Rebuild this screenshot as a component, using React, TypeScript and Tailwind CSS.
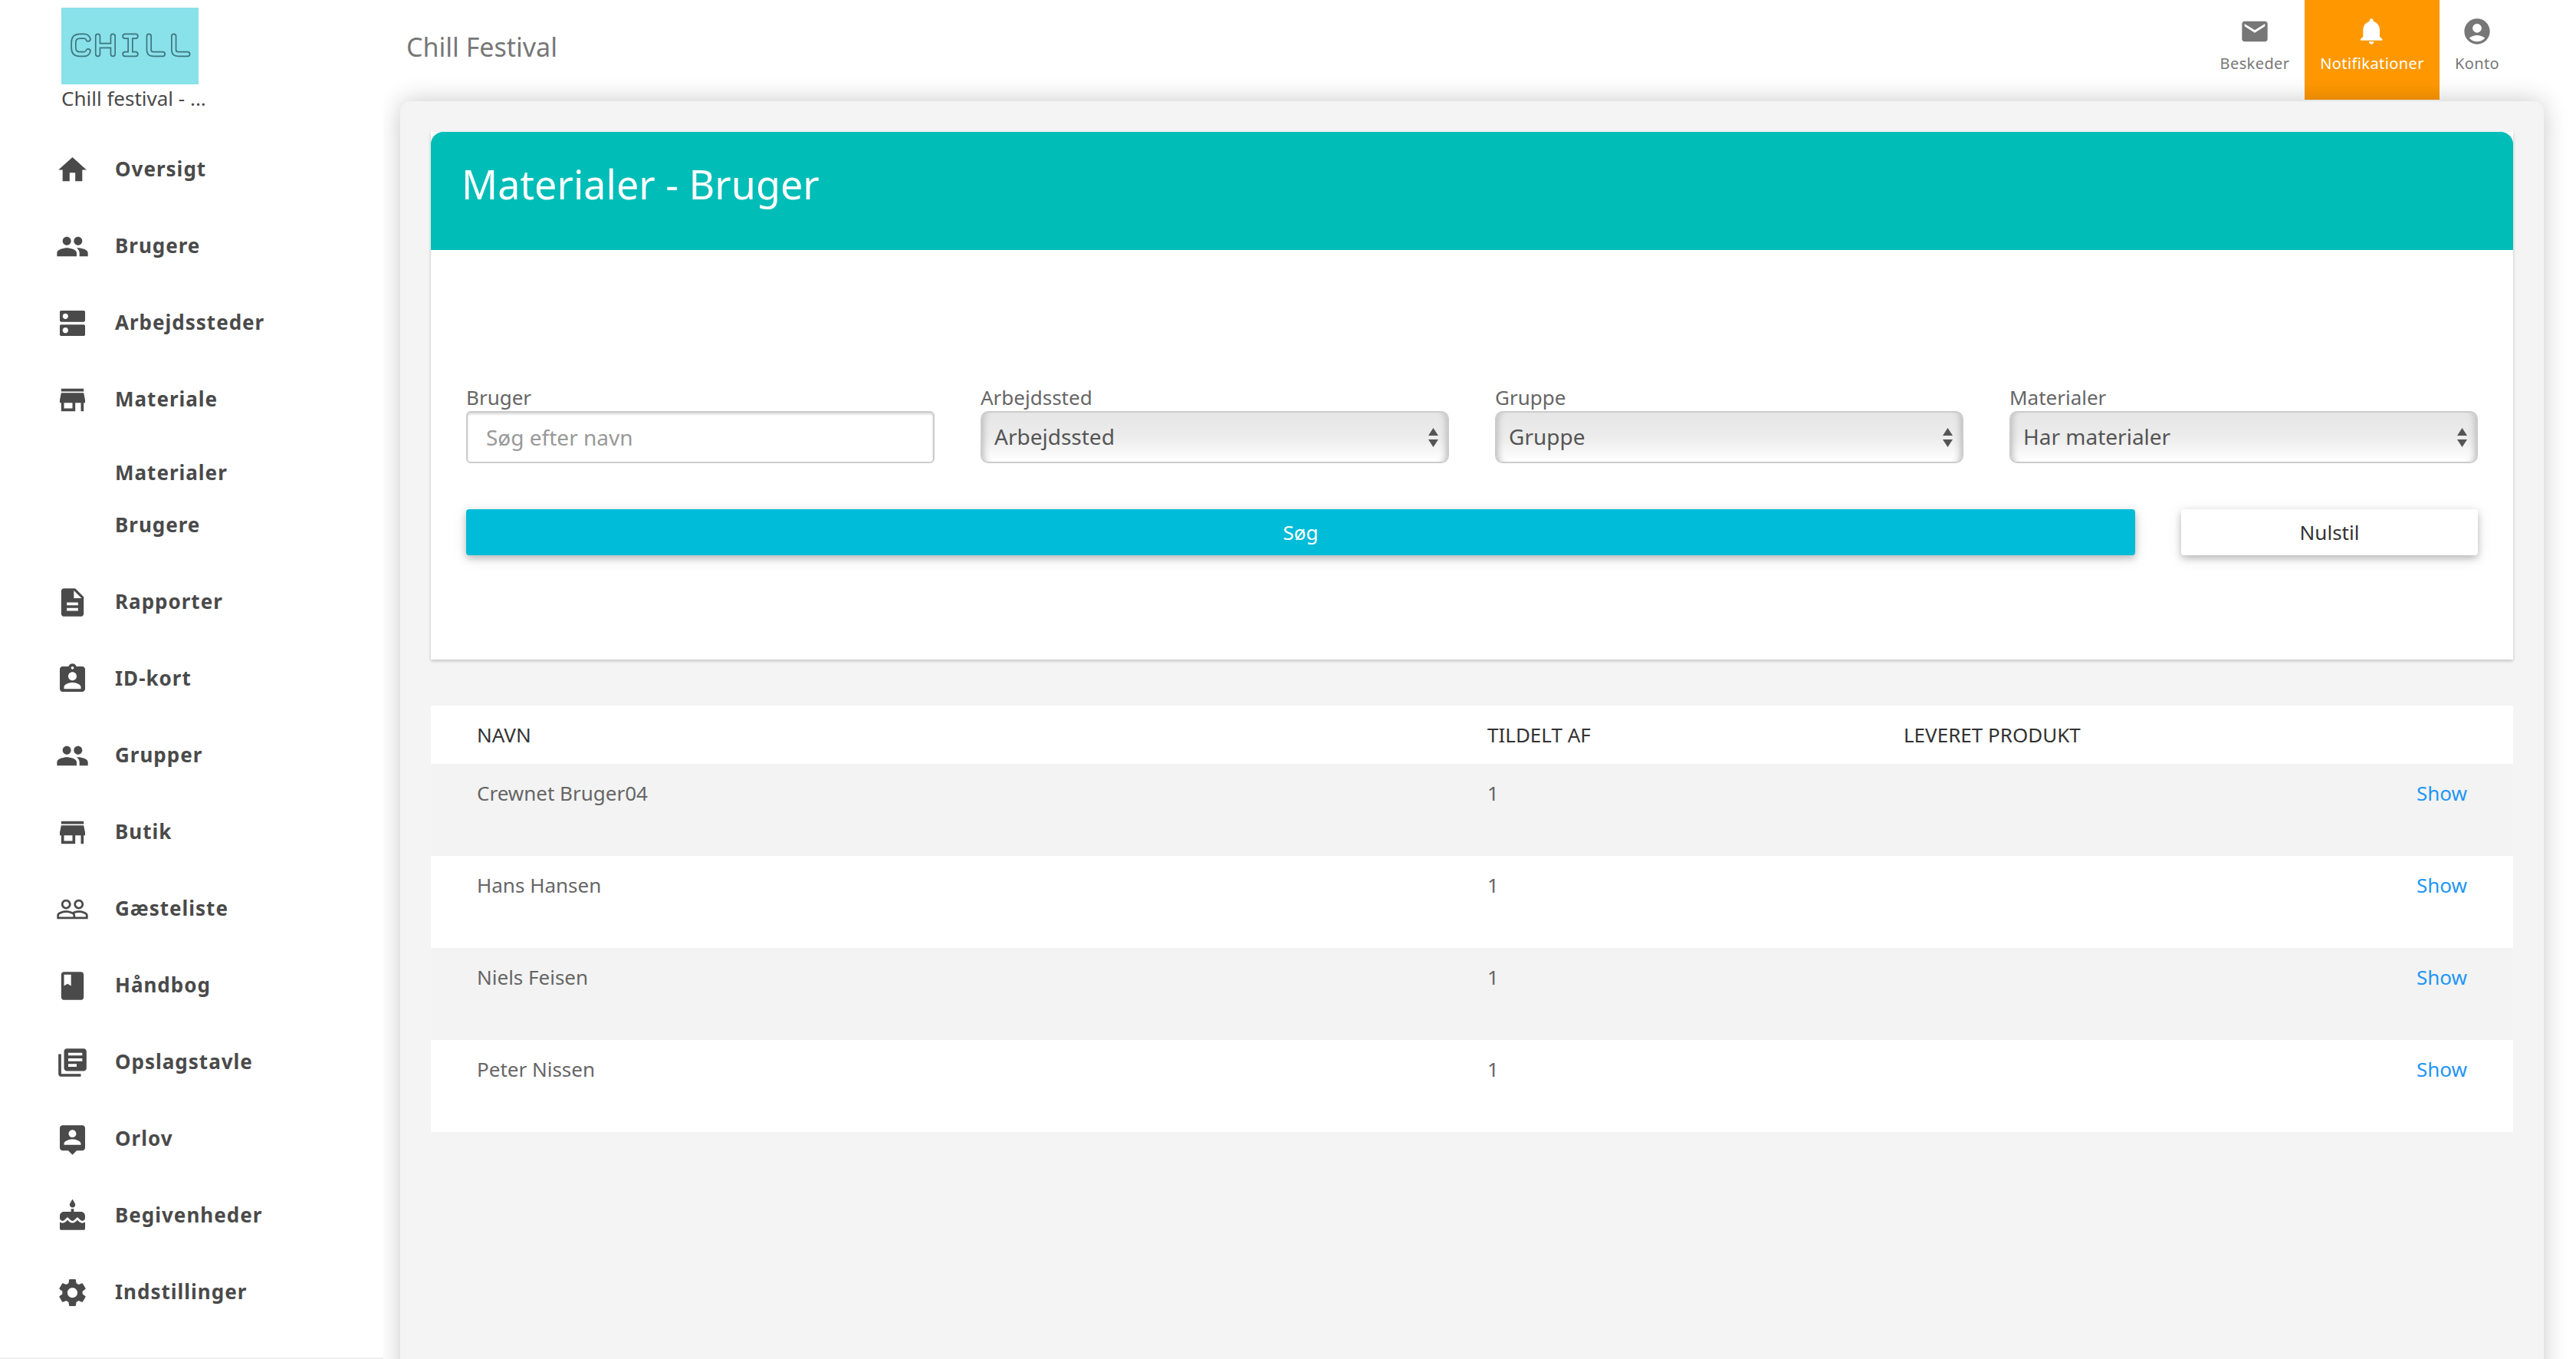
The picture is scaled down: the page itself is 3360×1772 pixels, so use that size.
import type { ComponentType } from "react";
import {
  MdAccountCircle,
  MdAssignmentInd,
  MdCake,
  MdClass,
  MdDescription,
  MdDns,
  MdEmail,
  MdHome,
  MdLibraryBooks,
  MdPeople,
  MdSettings,
  MdStore,
} from "react-icons/md";

type IconType = ComponentType<{ className?: string }>;

function PeopleOutline({ className }: { className?: string }) {
  return (
    <svg viewBox="0 0 24 24" fill="currentColor" className={className}>
      <path d="M16.5 13c-1.2 0-3.07.34-4.5 1-1.43-.67-3.3-1-4.5-1C5.33 13 1 14.08 1 16.25V19h22v-2.75c0-2.17-4.33-3.25-6.5-3.25zm-4 4.5h-10v-1.25c0-.54 2.56-1.75 5-1.75s5 1.21 5 1.75v1.25zm9 0H14v-1.25c0-.46-.2-.86-.52-1.22.88-.3 1.96-.53 3.02-.53 2.44 0 5 1.21 5 1.75v1.25zM7.5 12c1.93 0 3.5-1.57 3.5-3.5S9.43 5 7.5 5 4 6.57 4 8.5 5.57 12 7.5 12zm0-5.5c1.1 0 2 .9 2 2s-.9 2-2 2-2-.9-2-2 .9-2 2-2zm9 5.5c1.93 0 3.5-1.57 3.5-3.5S18.43 5 16.5 5 13 6.57 13 8.5s1.57 3.5 3.5 3.5zm0-5.5c1.1 0 2 .9 2 2s-.9 2-2 2-2-.9-2-2 .9-2 2-2z" />
    </svg>
  );
}

function PersonPin({ className }: { className?: string }) {
  return (
    <svg viewBox="0 0 24 24" fill="currentColor" className={className}>
      <path d="M19 2H5c-1.110 0-2 .9-2 2v14c0 1.100.89 2 2 2h4l3 3 3-3h4c1.100 0 2-.9 2-2V4c0-1.100-.9-2-2-2zm-7 3.300c1.490 0 2.700 1.210 2.700 2.700 0 1.490-1.210 2.700-2.700 2.700-1.490 0-2.700-1.210-2.700-2.700 0-1.490 1.210-2.700 2.700-2.700zM18 16H6v-.9c0-2 4-3.100 6-3.100s6 1.100 6 3.100v.9z" />
    </svg>
  );
}

function Bell({ className }: { className?: string }) {
  return (
    <svg viewBox="0 0 24 24" fill="currentColor" className={className}>
      <path d="M11.5 22c1.1 0 2-.9 2-2h-4c0 1.1.9 2 2 2zm6.5-6v-5.5c0-3.07-2.13-5.64-5-6.32V3.5c0-.83-.67-1.5-1.5-1.5S10 2.67 10 3.5v.68c-2.87.68-5 3.25-5 6.32V16l-2 2v1h17v-1l-2-2z" />
    </svg>
  );
}

const NAV: { label: string; icon: IconType; children?: string[] }[] = [
  { label: "Oversigt", icon: MdHome },
  { label: "Brugere", icon: MdPeople },
  { label: "Arbejdssteder", icon: MdDns },
  { label: "Materiale", icon: MdStore, children: ["Materialer", "Brugere"] },
  { label: "Rapporter", icon: MdDescription },
  { label: "ID-kort", icon: MdAssignmentInd },
  { label: "Grupper", icon: MdPeople },
  { label: "Butik", icon: MdStore },
  { label: "Gæsteliste", icon: PeopleOutline },
  { label: "Håndbog", icon: MdClass },
  { label: "Opslagstavle", icon: MdLibraryBooks },
  { label: "Orlov", icon: PersonPin },
  { label: "Begivenheder", icon: MdCake },
  { label: "Indstillinger", icon: MdSettings },
];

const ROWS = ["Crewnet Bruger04", "Hans Hansen", "Niels Feisen", "Peter Nissen"];

const LOGO_LAYERS = [
  { width: 7.4, color: "#3f757c" },
  { width: 4, color: "#89e1ea" },
];

function Logo() {
  return (
    <svg
      viewBox="0 0 179 100"
      className="h-[100px] w-[179px] shrink-0 bg-[#89e1ea]"
      fill="none"
      strokeLinecap="round"
      strokeLinejoin="round"
    >
      {LOGO_LAYERS.map((layer) => (
        <g key={layer.width} stroke={layer.color} strokeWidth={layer.width}>
          <path d="M35 41Q33.500 37.300 30 37.300H24Q16 37.300 16 45.500V52.500Q16 60.500 24 60.500H30Q33.500 60.500 35 56.800" />
          <path d="M47.600 37.300V60.500M67.300 37.300V60.500M47.600 49.500H67.300" />
          <path d="M83 37.300H97M90 37.300V60.500M83 60.500H97" />
          <path d="M114.300 37.300V55Q114.300 60.500 120 60.500H132.300" />
          <path d="M146.700 37.300V55Q146.700 60.500 152.500 60.500H164.700" />
        </g>
      ))}
    </svg>
  );
}

function Sidebar() {
  return (
    <aside className="z-10 flex h-full w-[500px] shrink-0 flex-col border-b-2 border-[#eeeeee] bg-white text-[26px] text-[#4a4a4a]">
      <div className="flex h-[170px] flex-col pt-[10px] pl-[80px]">
        <Logo />
        <div className="h-[36px] w-[190px] truncate leading-[36px]">Chill festival - ...</div>
      </div>
      <nav className="flex flex-col font-bold tracking-[1px]">
        {NAV.map(({ label, icon: Icon, children }) => (
          <div key={label}>
            <a className="flex h-[100px] items-center gap-[34px] pl-[72px]">
              <Icon className="size-[44px] translate-x-[0.5px] translate-y-[1.5px]" />
              <span>{label}</span>
            </a>
            {children && (
              <div className="flex flex-col pb-[28px] pl-[150px]">
                <span className="flex h-[92px] items-center">{children[0]}</span>
                <span className="flex h-[44px] items-center">{children[1]}</span>
              </div>
            )}
          </div>
        ))}
      </nav>
    </aside>
  );
}

function TopBar() {
  return (
    <header className="flex h-[130px] shrink-0 justify-between pr-[80px] pl-[30px] text-[#777777]">
      <h2 className="pt-[36px] text-[34px] leading-[50px]">Chill Festival</h2>
      <div className="flex text-[20px] leading-[30px] tracking-[0.4px]">
        <a className="flex w-[130px] flex-col items-center pt-[21px]">
          <MdEmail className="size-[40px]" />
          <span className="pt-[7px]">Beskeder</span>
        </a>
        <a className="flex w-[176px] flex-col items-center bg-[#ff9800] pt-[21px] text-white">
          <Bell className="size-[40px]" />
          <span className="pt-[7px]">Notifikationer</span>
        </a>
        <a className="flex w-[98px] flex-col items-center pt-[21px]">
          <MdAccountCircle className="size-[40px]" />
          <span className="pt-[7px]">Konto</span>
        </a>
      </div>
    </header>
  );
}

function SelectField({ label, value }: { label: string; value: string }) {
  return (
    <label className="flex flex-col">
      <span className="text-[26px] leading-[36px] text-[#666666]">{label}</span>
      <span className="flex h-[68px] items-center justify-between rounded-[10px] border-2 border-[#cccccc] bg-linear-to-b from-[#e6e6e6] via-[#ececec] to-white pr-[12px] pl-[16px] text-[28px] text-[#555555] shadow-[inset_10px_0_8px_-8px_#bbbbbb,inset_-10px_0_8px_-8px_#bbbbbb]">
        <span className="pb-[2px]">{value}</span>
        <svg viewBox="0 0 13 25" className="h-[25px] w-[13px] fill-[#555555]">
          <path d="M6.500 0 13 10H0ZM0 15H13L6.500 25Z" />
        </svg>
      </span>
    </label>
  );
}

function FilterCard() {
  return (
    <section className="flex h-[688px] flex-col bg-white shadow-[0_2px_4px_rgba(0,0,0,0.2)]">
      <h1 className="h-[154px] rounded-t-[16px] bg-[#00bdb7] pt-[33px] pl-[40px] text-[52px] leading-[70px] text-white">
        Materialer - Bruger
      </h1>
      <div className="grid grid-cols-4 gap-x-[60px] px-[46px] pt-[174px]">
        <label className="flex flex-col">
          <span className="text-[26px] leading-[36px] text-[#666666]">Bruger</span>
          <input
            placeholder="Søg efter navn"
            className="h-[68px] rounded-[6px] border-2 border-[#cccccc] bg-white px-[24px] text-[28px] shadow-[inset_0_2px_3px_rgba(0,0,0,0.16)] placeholder:text-[#999999]"
          />
        </label>
        <SelectField label="Arbejdssted" value="Arbejdssted" />
        <SelectField label="Gruppe" value="Gruppe" />
        <SelectField label="Materialer" value="Har materialer" />
      </div>
      <div className="flex gap-[60px] px-[46px] pt-[60px] text-[26px]">
        <button className="h-[60px] flex-1 rounded-[4px] bg-[#00bcd8] text-white shadow-[0_4px_10px_rgba(0,0,0,0.22),0_4px_20px_rgba(0,0,0,0.1)]">
          Søg
        </button>
        <button className="h-[60px] w-[387px] rounded-[4px] bg-white text-[#333333] shadow-[0_4px_10px_rgba(0,0,0,0.22),0_4px_20px_rgba(0,0,0,0.1)]">
          Nulstil
        </button>
      </div>
    </section>
  );
}

function MaterialsTable() {
  return (
    <section className="mt-[60px] flex flex-col text-[26px] leading-[36px] text-[#666666]">
      <div className="grid h-[76px] grid-cols-[1318px_543px_1fr] bg-white pt-[20px] pl-[60px] text-[#333333]">
        <span>NAVN</span>
        <span>TILDELT AF</span>
        <span>LEVERET PRODUKT</span>
      </div>
      {ROWS.map((name) => (
        <div
          key={name}
          className="grid h-[120px] grid-cols-[1318px_543px_1fr] bg-white pt-[20px] pr-[60px] pl-[60px] even:bg-[#f3f3f3]"
        >
          <span>{name}</span>
          <span>1</span>
          <a className="text-right text-[#2196f3]">Show</a>
        </div>
      ))}
    </section>
  );
}

export default function App() {
  return (
    <div className="flex h-[1772px] w-[3360px] overflow-hidden bg-white font-['Noto_Sans',sans-serif]">
      <Sidebar />
      <div className="flex flex-1 flex-col">
        <TopBar />
        <main className="mt-[2px] mr-[42px] -mb-[60px] ml-[22px] flex-1 rounded-t-[14px] bg-[#f4f4f4] p-[40px] shadow-[0_0_32px_rgba(0,0,0,0.22)]">
          <FilterCard />
          <MaterialsTable />
        </main>
      </div>
    </div>
  );
}
